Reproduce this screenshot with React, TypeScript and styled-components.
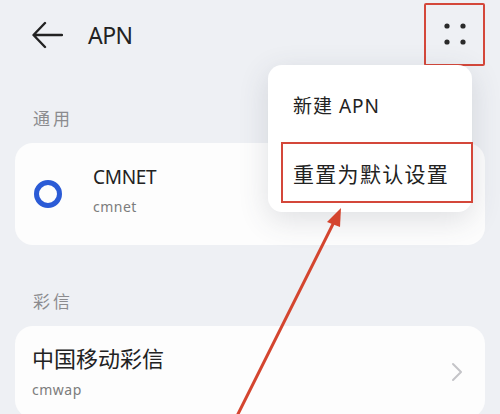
import React from "react";
import styled, { createGlobalStyle } from "styled-components";

const GlobalStyle = createGlobalStyle`
  html, body {
    margin: 0;
    padding: 0;
    background: #eef0f4;
  }
  body {
    font-family: "Noto Sans", "Noto Sans CJK SC", sans-serif;
    color: #1e1e1e;
  }
`;

const Page = styled.div`
  position: relative;
  width: 500px;
  height: 414px;
  overflow: hidden;
  background: #eef0f4;
  display: flex;
  flex-direction: column;
`;

const Header = styled.div`
  height: 70px;
  display: flex;
  align-items: center;
  padding: 0 15px 0 31px;
  flex-shrink: 0;
`;

const BackButton = styled.div`
  width: 34px;
  height: 30px;
  display: flex;
  align-items: center;
`;

const Title = styled.div`
  margin-left: 23px;
  font-size: 23px;
  letter-spacing: -0.5px;
  color: #222;
  flex: 1;
`;

const MoreButton = styled.div`
  width: 57px;
  height: 59px;
  margin-top: -2px;
  border: 2px solid #d4473a;
  border-radius: 2px;
  display: flex;
  align-items: center;
  justify-content: center;
`;

const Section = styled.div<{ $gap: number }>`
  margin-top: ${(p) => p.$gap}px;
  padding: 0 33px;
  height: 20px;
  line-height: 20px;
  font-size: 17px;
  color: #8b8b8e;
  letter-spacing: 3px;
`;

const Card = styled.div<{ $height: number }>`
  margin: 14px 15px 0;
  height: ${(p) => p.$height}px;
  background: #fdfdfd;
  border-radius: 18px;
  display: flex;
  align-items: center;
  padding: 0 22px 0 19px;
  flex-shrink: 0;
`;

const Radio = styled.div`
  width: 18px;
  height: 18px;
  border: 5px solid #2b5bd6;
  border-radius: 50%;
  margin-right: 31px;
  flex-shrink: 0;
`;

const Texts = styled.div<{ $offset: number; $lift: number }>`
  flex: 1;
  display: flex;
  flex-direction: column;
  margin-left: ${(p) => p.$offset}px;
  padding-bottom: ${(p) => p.$lift}px;
`;

const Name = styled.div<{ $size: number }>`
  font-size: ${(p) => p.$size}px;
  color: #222;
  letter-spacing: ${(p) => (p.$size > 21 ? 0 : -0.3)}px;
  line-height: 1.2;
`;

const Sub = styled.div`
  margin-top: 9px;
  font-size: 14px;
  color: #7c7c7c;
  letter-spacing: 0.5px;
`;

const Menu = styled.div`
  position: absolute;
  left: 268px;
  top: 65px;
  width: 204px;
  height: 147px;
  box-sizing: border-box;
  background: #ffffff;
  border-radius: 14px;
  box-shadow: 0 8px 30px rgba(60, 70, 90, 0.16);
  padding: 6px 0 0 13px;
  display: flex;
  flex-direction: column;
  gap: 4px;
`;

const MenuItem = styled.div<{ $marked?: boolean }>`
  width: 192px;
  height: ${(p) => (p.$marked ? 61 : 67)}px;
  box-sizing: border-box;
  display: flex;
  align-items: center;
  padding-left: ${(p) => (p.$marked ? 10 : 12)}px;
  border: ${(p) => (p.$marked ? "2px solid #d4473a" : "none")};
  font-size: ${(p) => (p.$marked ? 21 : 19)}px;
  letter-spacing: ${(p) => (p.$marked ? 1.3 : 1)}px;
  color: #222;
`;

const Arrow = styled.svg`
  position: absolute;
  left: 0;
  top: 0;
  pointer-events: none;
`;

const Chevron = () => (
  <svg width="12" height="20" viewBox="0 0 12 20">
    <path d="M2 2 L10 10 L2 18" fill="none" stroke="#c4c4c8" strokeWidth="2" strokeLinecap="round" strokeLinejoin="round" />
  </svg>
);

export default function App() {
  return (
    <Page>
      <GlobalStyle />
      <Header>
        <BackButton>
          <svg width="32" height="28" viewBox="0 0 32 28">
            <path d="M3 14 H31 M14 2 L2.5 14 L14 26" fill="none" stroke="#222" strokeWidth="2.4" strokeLinecap="round" strokeLinejoin="round" />
          </svg>
        </BackButton>
        <Title>APN</Title>
        <MoreButton>
          <svg width="24" height="24" viewBox="0 0 24 24">
            <circle cx="4" cy="4" r="2.6" fill="#2a2a2a" />
            <circle cx="20" cy="4" r="2.6" fill="#2a2a2a" />
            <circle cx="4" cy="20" r="2.6" fill="#2a2a2a" />
            <circle cx="20" cy="20" r="2.6" fill="#2a2a2a" />
          </svg>
        </MoreButton>
      </Header>

      <Section $gap={39}>通用</Section>
      <Card $height={102}>
        <Radio />
        <Texts $offset={0} $lift={6}>
          <Name $size={19}>CMNET</Name>
          <Sub>cmnet</Sub>
        </Texts>
        <Chevron />
      </Card>

      <Section $gap={47}>彩信</Section>
      <Card $height={92}>
        <Texts $offset={-2} $lift={0}>
          <Name $size={22}>中国移动彩信</Name>
          <Sub>cmwap</Sub>
        </Texts>
        <Chevron />
      </Card>

      <Menu>
        <MenuItem>新建 APN</MenuItem>
        <MenuItem $marked>重置为默认设置</MenuItem>
      </Menu>

      <Arrow width="500" height="414" viewBox="0 0 500 414">
        <line x1="237" y1="416" x2="334" y2="222" stroke="#d4452f" strokeWidth="3" />
        <polygon points="341,208 327,222 340,227" fill="#d4452f" />
      </Arrow>
    </Page>
  );
}
